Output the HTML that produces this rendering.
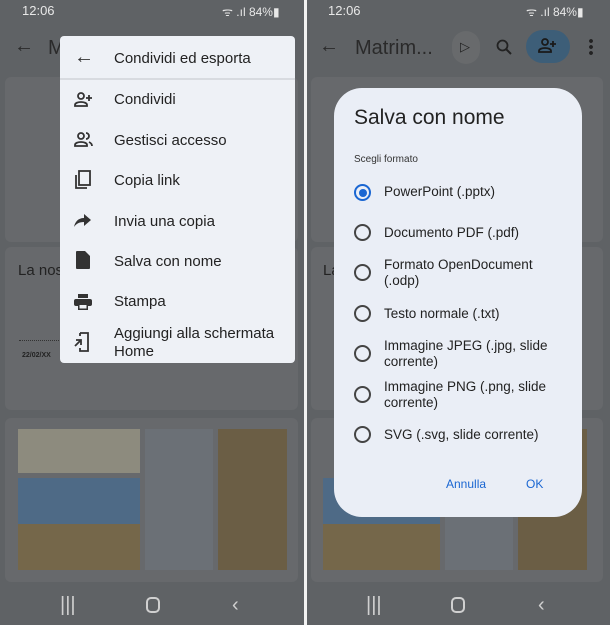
<!DOCTYPE html><html><head><meta charset="utf-8"><style>
*{margin:0;padding:0;box-sizing:border-box}
body{width:610px;height:625px;overflow:hidden;background:#5f6265;font-family:"Liberation Sans",sans-serif;position:relative}
.a{position:absolute}
.card{position:absolute;background:#67696c;border-radius:6px}
.st{color:#e8e8e8;font-size:13px}
.menu{left:60px;top:36px;width:235px;height:327px;background:#eef1f6;border-radius:4px}
.mi{position:absolute;left:54px;font-size:15px;color:#222}
.ic{position:absolute;left:14px}
.dlg{left:334px;top:88px;width:248px;height:429px;background:#eaeef6;border-radius:28px}
.r{position:absolute;left:20px;width:17px;height:17px;border:2px solid #444;border-radius:50%}
.rl{position:absolute;left:50px;font-size:13.5px;color:#222;line-height:16px}
.nav{color:#d0d0d0;font-size:20px}
</style></head><body>
<!-- left panel -->
<div class="a st" style="left:22px;top:3px">12:06</div>
<div class="a st" style="left:222px;top:3px;font-size:12px">ᯤ .ıl 84%▮</div>
<div class="a" style="left:14px;top:35px;color:#2a2a2a;font-size:20px">←</div>
<div class="a" style="left:48px;top:37px;color:#2a2a2a;font-size:20px">M</div>
<div class="card" style="left:5px;top:77px;width:293px;height:165px"></div>
<div class="card" style="left:5px;top:247px;width:293px;height:163px"></div>
<div class="a" style="left:18px;top:262px;font-size:15px;color:#222">La nostr</div>
<div class="a" style="left:19px;top:340px;width:40px;border-top:1px dotted #333"></div>
<div class="a" style="left:22px;top:352px;font-size:7px;font-weight:bold;color:#222">22/02/XX</div>
<div class="card" style="left:5px;top:418px;width:293px;height:164px"></div>
<div class="a" style="left:18px;top:429px;width:122px;height:44px;background:#8d8b7e"></div>
<div class="a" style="left:18px;top:478px;width:122px;height:48px;background:#4e6a86"></div>
<div class="a" style="left:18px;top:524px;width:122px;height:46px;background:#75674a"></div>
<div class="a" style="left:145px;top:429px;width:68px;height:141px;background:#6b7076"></div>
<div class="a" style="left:218px;top:429px;width:69px;height:141px;background:#6b5e45"></div>
<div class="a menu">
<div class="a" style="left:0;top:42px;width:235px;height:2px;background:#d8dbe0"></div>
<div class="ic" style="top:10px;font-size:20px;color:#333">←</div>
<div class="mi" style="top:14px">Condividi ed esporta</div>
<svg class="ic" style="top:56px" width="20" height="16" viewBox="0 0 20 16"><circle cx="7" cy="4" r="3" fill="none" stroke="#333" stroke-width="1.8"/><path d="M1 14v-1c0-2 3-3 6-3s6 1 6 3v1z" fill="none" stroke="#333" stroke-width="1.8"/><path d="M15 3v6M12 6h6" stroke="#333" stroke-width="1.8"/></svg>
<div class="mi" style="top:55px">Condividi</div>
<svg class="ic" style="top:96px" width="20" height="16" viewBox="0 0 20 16"><circle cx="7" cy="4" r="3" fill="none" stroke="#333" stroke-width="1.8"/><path d="M1 14v-1c0-2 3-3 6-3s6 1 6 3v1z" fill="none" stroke="#333" stroke-width="1.8"/><path d="M12 1a3 3 0 010 6M15 10c2 1 3 2 3 4" fill="none" stroke="#333" stroke-width="1.8"/></svg>
<div class="mi" style="top:96px">Gestisci accesso</div>
<svg class="ic" style="top:134px" width="18" height="20" viewBox="0 0 18 20"><rect x="5" y="1" width="11" height="14" fill="none" stroke="#333" stroke-width="1.8"/><path d="M2 5v13h11" fill="none" stroke="#333" stroke-width="1.8"/></svg>
<div class="mi" style="top:136px">Copia link</div>
<svg class="ic" style="top:178px" width="18" height="14" viewBox="0 0 18 14"><path d="M10 0l7 6-7 6V8C5 8 2 10 0 13c1-5 4-9 10-9z" fill="#333"/></svg>
<div class="mi" style="top:177px">Invia una copia</div>
<svg class="ic" style="top:215px;left:16px" width="14" height="18" viewBox="0 0 14 18"><path d="M0 1q0-1 1-1h8l5 5v12q0 1-1 1H1q-1 0-1-1z" fill="#333"/></svg>
<div class="mi" style="top:217px">Salva con nome</div>
<svg class="ic" style="top:258px" width="18" height="16" viewBox="0 0 18 16"><rect x="4" y="0" width="10" height="4" fill="#333"/><rect x="0" y="5" width="18" height="7" rx="2" fill="#333"/><rect x="4" y="10" width="10" height="6" fill="#333"/><rect x="5.5" y="11" width="7" height="3.5" fill="#eef1f6"/></svg>
<div class="mi" style="top:257px">Stampa</div>
<svg class="ic" style="top:296px" width="16" height="20" viewBox="0 0 16 20"><path d="M6 1h8v18H6v-3M6 4V1" fill="none" stroke="#333" stroke-width="1.8"/><path d="M1 14l6-6M2 8h5v5" fill="none" stroke="#333" stroke-width="1.8"/></svg>
<div class="mi" style="top:289px;line-height:18px">Aggiungi alla schermata<br>Home</div>
</div>
<!-- divider -->
<div class="a" style="left:304px;top:0;width:3px;height:625px;background:#f2f2f2"></div>
<!-- right panel -->
<div class="a st" style="left:328px;top:3px">12:06</div>
<div class="a st" style="left:526px;top:3px;font-size:12px">ᯤ .ıl 84%▮</div>
<div class="a" style="left:319px;top:35px;color:#2a2a2a;font-size:20px">←</div>
<div class="a" style="left:355px;top:37px;color:#2a2a2a;font-size:20px">Matrim...</div>
<div class="a" style="left:452px;top:31px;width:28px;height:33px;border-radius:14px;background:#686a6c"></div>
<div class="a" style="left:460px;top:39px;color:#222;font-size:13px">▷</div>
<svg class="a" style="left:496px;top:39px" width="16" height="16" viewBox="0 0 16 16"><circle cx="6.5" cy="6.5" r="5" fill="none" stroke="#222" stroke-width="1.8"/><path d="M10 10l5 5" stroke="#222" stroke-width="2"/></svg>
<div class="a" style="left:526px;top:30px;width:44px;height:33px;border-radius:17px;background:#3d5e78"></div>
<svg class="a" style="left:538px;top:38px" width="20" height="16" viewBox="0 0 20 16"><circle cx="7" cy="4" r="3" fill="none" stroke="#1a1a1a" stroke-width="1.8"/><path d="M1 14v-1c0-2 3-3 6-3s6 1 6 3v1z" fill="none" stroke="#1a1a1a" stroke-width="1.8"/><path d="M15 3v6M12 6h6" stroke="#1a1a1a" stroke-width="1.8"/></svg>
<div class="a" style="left:589px;top:38px;width:4px;height:18px;background:radial-gradient(circle,#222 1.8px,transparent 2px) 0 0/4px 6px"></div>
<div class="card" style="left:311px;top:77px;width:292px;height:165px"></div>
<div class="card" style="left:311px;top:247px;width:292px;height:163px"></div>
<div class="a" style="left:323px;top:262px;font-size:15px;color:#222">La</div>
<div class="card" style="left:311px;top:418px;width:292px;height:164px"></div>
<div class="a" style="left:323px;top:478px;width:117px;height:48px;background:#4e6a86"></div>
<div class="a" style="left:323px;top:524px;width:117px;height:46px;background:#75674a"></div>
<div class="a" style="left:445px;top:429px;width:68px;height:141px;background:#6b7076"></div>
<div class="a" style="left:518px;top:429px;width:69px;height:141px;background:#6b5e45"></div>
<div class="a dlg">
<div class="a" style="left:20px;top:18px;font-size:21px;color:#222">Salva con nome</div>
<div class="a" style="left:20px;top:66px;font-size:10px;color:#333">Scegli formato</div>
<div class="r" style="top:96px;border-color:#1a66d2"><div style="position:absolute;left:2.5px;top:2.5px;width:8px;height:8px;border-radius:50%;background:#1a66d2"></div></div>
<div class="rl" style="top:96px">PowerPoint (.pptx)</div>
<div class="r" style="top:136px"></div><div class="rl" style="top:137px">Documento PDF (.pdf)</div>
<div class="r" style="top:176px"></div><div class="rl" style="top:169px">Formato OpenDocument<br>(.odp)</div>
<div class="r" style="top:217px"></div><div class="rl" style="top:218px">Testo normale (.txt)</div>
<div class="r" style="top:257px"></div><div class="rl" style="top:250px">Immagine JPEG (.jpg, slide<br>corrente)</div>
<div class="r" style="top:298px"></div><div class="rl" style="top:291px">Immagine PNG (.png, slide<br>corrente)</div>
<div class="r" style="top:338px"></div><div class="rl" style="top:339px">SVG (.svg, slide corrente)</div>
<div class="a" style="left:112px;top:389px;font-size:12px;color:#1a66d2">Annulla</div>
<div class="a" style="left:192px;top:389px;font-size:12px;color:#1a66d2">OK</div>
</div>
<!-- nav -->
<div class="a nav" style="left:60px;top:594px">|||</div>
<div class="a" style="left:146px;top:597px;width:14px;height:16px;border:2px solid #d0d0d0;border-radius:5px"></div>
<div class="a nav" style="left:232px;top:594px">‹</div>
<div class="a nav" style="left:366px;top:594px">|||</div>
<div class="a" style="left:451px;top:597px;width:14px;height:16px;border:2px solid #d0d0d0;border-radius:5px"></div>
<div class="a nav" style="left:538px;top:594px">‹</div>
</body></html>
